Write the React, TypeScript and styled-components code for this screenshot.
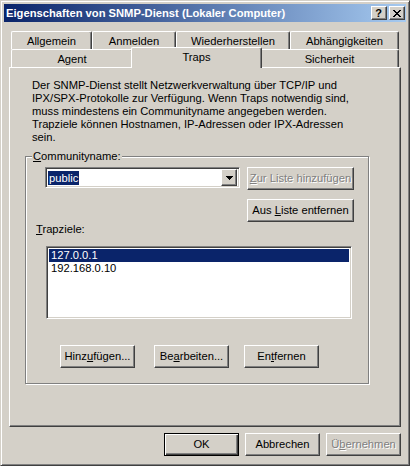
import React from "react";
import styled, { createGlobalStyle, css } from "styled-components";

const FACE = "#d4d0c8";
const HI = "#ffffff";
const SH = "#808080";
const DK = "#404040";
const NAVY = "#0a246a";

const Global = createGlobalStyle`
  html, body { margin: 0; padding: 0; background: ${FACE}; }
  body {
    font-family: "Liberation Sans", Arial, sans-serif;
    font-size: 11.2px;
    color: #000;
  }
  * { box-sizing: border-box; }
`;

const raised = css`
  border: 1px solid;
  border-color: ${HI} ${DK} ${DK} ${HI};
  box-shadow: inset -1px -1px ${SH}, inset 1px 1px ${FACE};
`;

const sunken = css`
  border: 1px solid;
  border-color: ${SH} ${HI} ${HI} ${SH};
  box-shadow: inset 1px 1px ${DK}, inset -1px -1px ${FACE};
`;

const Window = styled.div`
  width: 410px;
  height: 466px;
  background: ${FACE};
  border: 1px solid;
  border-color: ${FACE} ${DK} ${DK} ${FACE};
  box-shadow: inset 1px 1px ${HI}, inset -1px -1px ${SH};
  padding: 3px;
  display: flex;
  flex-direction: column;
`;

const TitleBar = styled.div`
  height: 18px;
  flex: none;
  display: flex;
  align-items: center;
  padding: 0 1px 0 2px;
  background: linear-gradient(to right, ${NAVY}, #a6caf0);
`;

const TitleText = styled.div`
  flex: 1;
  color: #fff;
  font-weight: bold;
  font-size: 11.2px;
  line-height: 14px;
  white-space: nowrap;
`;

const CaptionButtons = styled.div`
  display: flex;
  gap: 2px;
`;

const CaptionButton = styled.div`
  width: 16px;
  height: 14px;
  background: ${FACE};
  ${raised};
  display: flex;
  align-items: center;
  justify-content: center;
  font-weight: bold;
  font-size: 11px;
  line-height: 12px;
  padding-right: 1px;
`;

const Body = styled.div`
  flex: 1;
  display: flex;
  flex-direction: column;
  padding: 9px 5px 6px 5px;
`;

const TabStrip = styled.div`
  margin: 0 2px;
  display: flex;
  flex-direction: column;
`;

const TabRow = styled.div`
  display: flex;
  height: 18px;
  align-items: flex-start;
`;

const Tab = styled.div<{ $w: number; $active?: boolean }>`
  width: ${(p) => p.$w}px;
  height: 18px;
  flex: none;
  background: ${FACE};
  border-top: 1px solid ${HI};
  border-left: 1px solid ${HI};
  border-right: 1px solid ${DK};
  box-shadow: inset -1px 0 ${SH};
  border-radius: 2px 2px 0 0;
  padding-top: 3px;
  line-height: 13px;
  text-align: center;
  white-space: nowrap;
  ${(p) =>
    p.$active &&
    css`
      position: relative;
      z-index: 1;
      width: ${p.$w + 4}px;
      height: 21px;
      margin: -2px -2px 0 -2px;
    `}
`;

const Panel = styled.div`
  flex: 1;
  border: 1px solid;
  border-color: ${HI} ${DK} ${DK} ${HI};
  box-shadow: inset -1px -1px ${SH};
  display: flex;
  flex-direction: column;
  align-items: flex-start;
`;

const Description = styled.div`
  margin: 11px 0 0 22px;
  line-height: 13px;
  white-space: nowrap;
`;

const GroupBox = styled.div`
  position: relative;
  margin: 12px 0 0 15px;
  width: 344px;
  border: 1px solid ${SH};
  box-shadow: inset 1px 1px ${HI}, 1px 1px ${HI};
  padding: 10px 0 15px 0;
  display: flex;
  flex-direction: column;
  align-items: flex-start;
`;

const GroupLabel = styled.div`
  position: absolute;
  top: -7px;
  left: 6px;
  padding: 0 1px;
  line-height: 13px;
  background: ${FACE};
`;

const TopRow = styled.div`
  display: flex;
  gap: 7px;
  margin-left: 19px;
  align-items: flex-start;
`;

const ButtonColumn = styled.div`
  display: flex;
  flex-direction: column;
  gap: 9px;
`;

const Combo = styled.div`
  width: 195px;
  height: 21px;
  background: #fff;
  ${sunken};
  padding: 2px;
  display: flex;
  align-items: center;
`;

const ComboText = styled.div`
  flex: 1;
  display: flex;
  align-items: center;
  height: 17px;
`;

const Highlight = styled.span`
  background: ${NAVY};
  color: #fff;
  line-height: 14px;
  padding: 0 1px;
`;

const DropButton = styled.div`
  width: 16px;
  height: 17px;
  background: ${FACE};
  ${raised};
  display: flex;
  align-items: center;
  justify-content: center;
`;

const Button = styled.div<{
  $w?: number;
  $disabled?: boolean;
  $default?: boolean;
  $ml?: number;
}>`
  width: ${(p) => p.$w ?? 75}px;
  height: 23px;
  flex: none;
  margin-left: ${(p) => p.$ml ?? 0}px;
  background: ${FACE};
  display: flex;
  align-items: center;
  justify-content: center;
  white-space: nowrap;
  line-height: 13px;
  ${(p) =>
    p.$default
      ? css`
          border: 1px solid #000;
          box-shadow: inset 1px 1px ${HI}, inset -1px -1px ${DK},
            inset -2px -2px ${SH};
        `
      : raised};
  ${(p) =>
    p.$disabled &&
    css`
      color: ${SH};
      text-shadow: 1px 1px ${HI};
    `}
`;

const FieldLabel = styled.div`
  margin: 1px 0 0 10px;
  line-height: 13px;
`;

const ListBox = styled.div`
  margin: 10px 0 0 20px;
  width: 306px;
  height: 73px;
  background: #fff;
  ${sunken};
  padding: 2px;
`;

const ListItem = styled.div<{ $selected?: boolean }>`
  height: 13px;
  line-height: 13px;
  padding-left: 2px;
  background: ${(p) => (p.$selected ? NAVY : "transparent")};
  color: ${(p) => (p.$selected ? "#fff" : "#000")};
`;

const ButtonRow = styled.div`
  display: flex;
  margin-top: 26px;
`;

const DialogButtons = styled.div`
  display: flex;
  justify-content: flex-end;
  gap: 6px;
  margin-top: 6px;
`;

const topTabs = [
  { label: "Allgemein", w: 81 },
  { label: "Anmelden", w: 84 },
  { label: "Wiederherstellen", w: 114 },
  { label: "Abhängigkeiten", w: 109 },
];

const bottomTabs = [
  { label: "Agent", w: 122 },
  { label: "Traps", w: 127, active: true },
  { label: "Sicherheit", w: 139 },
];

export default function App() {
  return (
    <>
      <Global />
      <Window>
        <TitleBar>
          <TitleText>Eigenschaften von SNMP-Dienst (Lokaler Computer)</TitleText>
          <CaptionButtons>
            <CaptionButton>?</CaptionButton>
            <CaptionButton>
              <svg width="8" height="7" viewBox="0 0 8 7" shapeRendering="crispEdges">
                <path
                  d="M0 0h2v1h-2zM6 0h2v1h-2zM1 1h2v1h-2zM5 1h2v1h-2zM2 2h4v1h-4zM3 3h2v1h-2zM2 4h4v1h-4zM1 5h2v1h-2zM5 5h2v1h-2zM0 6h2v1h-2zM6 6h2v1h-2z"
                  fill="#000"
                />
              </svg>
            </CaptionButton>
          </CaptionButtons>
        </TitleBar>
        <Body>
          <TabStrip>
            <TabRow>
              {topTabs.map((t) => (
                <Tab key={t.label} $w={t.w}>
                  {t.label}
                </Tab>
              ))}
            </TabRow>
            <TabRow>
              {bottomTabs.map((t) => (
                <Tab key={t.label} $w={t.w} $active={t.active}>
                  {t.label}
                </Tab>
              ))}
            </TabRow>
          </TabStrip>
          <Panel>
            <Description>
              Der SNMP-Dienst stellt Netzwerkverwaltung über TCP/IP und
              <br />
              IPX/SPX-Protokolle zur Verfügung. Wenn Traps notwendig sind,
              <br />
              muss mindestens ein Communityname angegeben werden.
              <br />
              Trapziele können Hostnamen, IP-Adressen oder IPX-Adressen
              <br />
              sein.
            </Description>
            <GroupBox>
              <GroupLabel>
                <u>C</u>ommunityname:
              </GroupLabel>
              <TopRow>
                <Combo>
                  <ComboText>
                    <Highlight>public</Highlight>
                  </ComboText>
                  <DropButton>
                    <svg width="7" height="4" viewBox="0 0 7 4" shapeRendering="crispEdges">
                      <path d="M0 0h7v1h-7zM1 1h5v1h-5zM2 2h3v1h-3zM3 3h1v1h-1z" fill="#000" />
                    </svg>
                  </DropButton>
                </Combo>
                <ButtonColumn>
                  <Button $w={107} $disabled>
                    <u>Z</u>ur Liste hinzufügen
                  </Button>
                  <Button $w={107}>
                    Aus&nbsp;<u>L</u>iste entfernen
                  </Button>
                </ButtonColumn>
              </TopRow>
              <FieldLabel>
                <u>T</u>rapziele:
              </FieldLabel>
              <ListBox>
                <ListItem $selected>127.0.0.1</ListItem>
                <ListItem>192.168.0.10</ListItem>
              </ListBox>
              <ButtonRow>
                <Button $ml={34}>
                  Hinz<u>u</u>fügen...
                </Button>
                <Button $ml={19}>
                  Be<u>a</u>rbeiten...
                </Button>
                <Button $ml={15}>
                  En<u>t</u>fernen
                </Button>
              </ButtonRow>
            </GroupBox>
          </Panel>
          <DialogButtons>
            <Button $default>OK</Button>
            <Button>Abbrechen</Button>
            <Button $disabled>
              Ü<u>b</u>ernehmen
            </Button>
          </DialogButtons>
        </Body>
      </Window>
    </>
  );
}
